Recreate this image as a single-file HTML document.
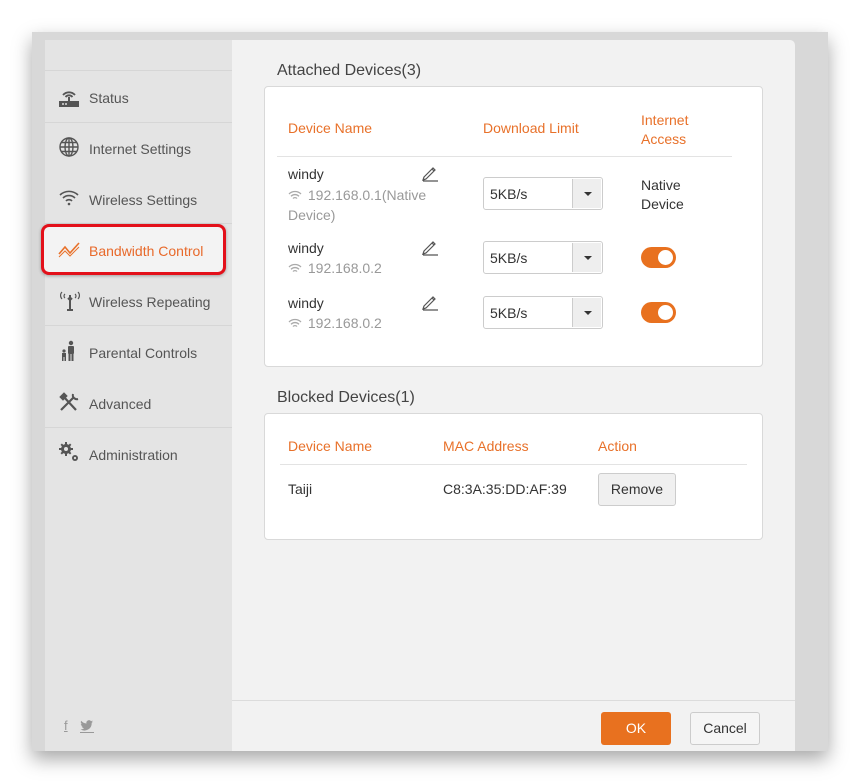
<!DOCTYPE html>
<html><head><meta charset="utf-8"><style>
*{box-sizing:border-box;margin:0;padding:0}
body{width:859px;height:783px;background:#fff;font-family:"Liberation Sans",Arial,sans-serif;position:relative;overflow:hidden}
.a{position:absolute}
.frame{left:32px;top:32px;width:796px;height:719px;background:#d8d8d8;box-shadow:0 8px 18px rgba(0,0,0,.35)}
.side{left:45px;top:40px;width:187px;height:711px;background:#e4e4e4}
.main{left:232px;top:40px;width:563px;height:660px;background:#f2f2f2;border-top-right-radius:5px}
.foot{left:232px;top:700px;width:563px;height:51px;background:#f2f2f2;border-top:1px solid #dcdcdc}
.sep{position:absolute;left:45px;width:187px;height:1px;background:#d6d6d6}
.mi{position:absolute;left:89px;font-size:14px;color:#555;line-height:16px}
.ic{position:absolute;left:58px}
.card{position:absolute;background:#fff;border:1px solid #d9d9d9;border-radius:4px}
.t{position:absolute;font-size:14px;line-height:16px;color:#333}
.o{color:#e8712a}
.g{color:#999}
.sel{position:absolute;left:483px;width:120px;height:33px;border:1px solid #ccc;border-radius:3px;background:#fff}
.sel span{position:absolute;left:6px;top:8px;font-size:14px;color:#333}
.sel b{position:absolute;right:1px;top:1px;width:29px;height:29px;background:#eee;border-left:1px solid #ccc}
.sel b:after{content:"";position:absolute;left:11px;top:13px;border:4px solid transparent;border-top:4px solid #333;border-bottom:0}
.tog{position:absolute;left:641px;width:35px;height:21px;border-radius:11px;background:#e8711f}
.tog:after{content:"";position:absolute;right:3px;top:3px;width:15px;height:15px;border-radius:50%;background:#fff}
.pen{position:absolute;left:421px}
.wf{display:inline-block;vertical-align:-1px;margin-right:2px}
</style></head><body>
<div class="a frame"></div>
<div class="a side"></div>
<div class="a main"></div>
<div class="a foot"></div>

<div class="sep" style="top:70px"></div>
<div class="sep" style="top:122px"></div>
<div class="sep" style="top:223px"></div>
<div class="sep" style="top:325px"></div>
<div class="sep" style="top:427px;width:187px"></div>

<div class="a" style="left:41px;top:224px;width:185px;height:51px;border:3px solid #e3101a;border-radius:8px;background:#f3f3f3;box-shadow:0 1px 3px rgba(0,0,0,.3)"></div>

<svg class="ic" style="top:86px" width="22" height="22" viewBox="0 0 22 22"><path d="M5 9a8 8 0 0 1 12 0M7.5 11a4.5 4.5 0 0 1 7 0" stroke="#555" stroke-width="1.8" fill="none"/><rect x="10" y="11" width="2" height="5" fill="#555"/><rect x="1" y="15" width="20" height="6" fill="#555"/><circle cx="5" cy="18" r="1" fill="#ddd"/><circle cx="8" cy="18" r="1" fill="#ddd"/></svg>
<div class="mi" style="top:90px">Status</div>
<svg class="ic" style="top:136px" width="22" height="22" viewBox="0 0 22 22" fill="none" stroke="#555" stroke-width="1.4"><circle cx="11" cy="11" r="9"/><ellipse cx="11" cy="11" rx="4" ry="9"/><path d="M2 11h18M3.5 6.5h15M3.5 15.5h15M11 2v18"/></svg>
<div class="mi" style="top:141px">Internet Settings</div>
<svg class="ic" style="top:189px" width="22" height="18" viewBox="0 0 22 18" fill="none" stroke="#555" stroke-width="1.6"><path d="M2 6a13 13 0 0 1 18 0M5 9a8.5 8.5 0 0 1 12 0M8 12a4 4 0 0 1 6 0"/><circle cx="11" cy="15" r="1.3" fill="#555" stroke="none"/></svg>
<div class="mi" style="top:192px">Wireless Settings</div>
<svg class="ic" style="top:240px" width="22" height="18" viewBox="0 0 22 18" fill="none" stroke="#e8712a" stroke-width="1.6"><path d="M1 14l6-7 5 6 9-10"/><path d="M1 17l6-6 5 5 9-9" stroke-width="1"/></svg>
<div class="mi o" style="top:243px;color:#e8692a">Bandwidth Control</div>
<svg class="ic" style="top:290px" width="24" height="22" viewBox="0 0 24 22" fill="none" stroke="#555" stroke-width="1.2"><path d="M4 2a5 5 0 0 0 0 7M7 4a2.5 2.5 0 0 0 0 4M20 2a5 5 0 0 1 0 7M17 4a2.5 2.5 0 0 1 0 4"/><path d="M12 5v15M9 20h6M10 8l2 2 2-2" stroke-width="2"/></svg>
<div class="mi" style="top:294px">Wireless Repeating</div>
<svg class="ic" style="top:340px" width="22" height="22" viewBox="0 0 22 22" fill="#555"><circle cx="13" cy="3" r="2.2"/><rect x="10" y="6" width="6" height="8" rx="1"/><rect x="10.5" y="13" width="2" height="8"/><rect x="13.5" y="13" width="2" height="8"/><circle cx="6" cy="11" r="1.6"/><rect x="4" y="13" width="4" height="4"/><rect x="4" y="16" width="1.5" height="5"/><rect x="6.5" y="16" width="1.5" height="5"/></svg>
<div class="mi" style="top:345px">Parental Controls</div>
<svg class="ic" style="top:391px" width="22" height="22" viewBox="0 0 22 22" fill="none" stroke="#555" stroke-width="2.2"><path d="M3 19L16 6M5 5l13 14"/><path d="M2 6l4-4 3 3-4 4z" fill="#555" stroke-width="1"/><path d="M15 3a4 4 0 0 0 5 5" stroke-width="2"/></svg>
<div class="mi" style="top:396px">Advanced</div>
<svg class="ic" style="top:441px" width="22" height="22" viewBox="0 0 22 22" fill="#555"><circle cx="8" cy="8" r="5"/><path d="M7 1h2v3H7zM7 12h2v3H7zM1 7h3v2H1zM12 7h3v2h-3zM2.5 3.9l1.4-1.4 2 2-1.4 1.4zM10 11.5l1.4-1.4 2 2-1.4 1.4zM2.5 12.1l2-2 1.4 1.4-2 2zM10 4.5l2-2 1.4 1.4-2 2z"/><circle cx="8" cy="8" r="2" fill="#e4e4e4"/><circle cx="17" cy="17" r="3"/><circle cx="17" cy="17" r="1.1" fill="#e4e4e4"/></svg>
<div class="mi" style="top:447px">Administration</div>

<div class="t g" style="left:64px;top:718px;font-size:13px;text-decoration:underline">f</div>
<svg class="a" style="left:80px;top:719px" width="14" height="15" viewBox="0 0 14 15" fill="#999"><path d="M13 2.5c-.5.2-1 .4-1.5.4.5-.3 1-.8 1.1-1.4-.5.3-1 .5-1.6.6A2.6 2.6 0 0 0 6.5 4.5 7.3 7.3 0 0 1 1.2 1.8a2.6 2.6 0 0 0 .8 3.4c-.4 0-.8-.1-1.2-.3 0 1.3.9 2.300 2.1 2.5-.4.1-.8.1-1.2 0 .3 1 1.3 1.800 2.400 1.800A5.200 5.200 0 0 1 .5 10.400a7.300 7.300 0 0 0 11.200-6.500c.5-.4.900-.8 1.300-1.400z"/><rect x="0" y="13" width="14" height="1"/></svg>

<div class="t" style="left:277px;top:63px;font-size:16px;color:#444">Attached Devices(3)</div>
<div class="card" style="left:264px;top:86px;width:499px;height:281px"></div>
<div class="t o" style="left:288px;top:120px">Device Name</div>
<div class="t o" style="left:483px;top:120px">Download Limit</div>
<div class="t o" style="left:641px;top:111px;line-height:19px">Internet<br>Access</div>
<div class="a" style="left:277px;top:156px;width:455px;height:1px;background:#e3e3e3"></div>

<div class="t" style="left:288px;top:166px">windy</div>
<div class="t g" style="left:288px;top:185px;line-height:20px;width:150px"><svg class="wf" width="14" height="11" viewBox="0 0 14 11" fill="none" stroke="#aaa" stroke-width="1.3"><path d="M1 4a8.5 8.5 0 0 1 12 0M3 6.3a5.5 5.5 0 0 1 8 0M5 8.5a2.7 2.7 0 0 1 4 0"/></svg> 192.168.0.1(Native Device)</div>
<div class="sel" style="top:177px"><span>5KB/s</span><b></b></div>
<div class="t" style="left:641px;top:176px;line-height:19px">Native<br>Device</div>

<div class="t" style="left:288px;top:240px">windy</div>
<div class="t g" style="left:288px;top:260px"><svg class="wf" width="14" height="11" viewBox="0 0 14 11" fill="none" stroke="#aaa" stroke-width="1.3"><path d="M1 4a8.5 8.5 0 0 1 12 0M3 6.3a5.5 5.5 0 0 1 8 0M5 8.5a2.7 2.7 0 0 1 4 0"/></svg> 192.168.0.2</div>
<div class="sel" style="top:241px"><span>5KB/s</span><b></b></div>
<div class="tog" style="top:247px"></div>

<div class="t" style="left:288px;top:295px">windy</div>
<div class="t g" style="left:288px;top:315px"><svg class="wf" width="14" height="11" viewBox="0 0 14 11" fill="none" stroke="#aaa" stroke-width="1.3"><path d="M1 4a8.5 8.5 0 0 1 12 0M3 6.3a5.5 5.5 0 0 1 8 0M5 8.5a2.7 2.7 0 0 1 4 0"/></svg> 192.168.0.2</div>
<div class="sel" style="top:296px"><span>5KB/s</span><b></b></div>
<div class="tog" style="top:302px"></div>

<svg class="pen" style="top:164px" width="18" height="18" viewBox="0 0 18 18" fill="none" stroke="#555" stroke-width="1.2"><path d="M3 13l9-9 2 2-9 9-3 1zM11 5l2 2M2 17h15"/></svg>
<svg class="pen" style="top:238px" width="18" height="18" viewBox="0 0 18 18" fill="none" stroke="#555" stroke-width="1.2"><path d="M3 13l9-9 2 2-9 9-3 1zM11 5l2 2M2 17h15"/></svg>
<svg class="pen" style="top:293px" width="18" height="18" viewBox="0 0 18 18" fill="none" stroke="#555" stroke-width="1.2"><path d="M3 13l9-9 2 2-9 9-3 1zM11 5l2 2M2 17h15"/></svg>

<div class="t" style="left:277px;top:390px;font-size:16px;color:#444">Blocked Devices(1)</div>
<div class="card" style="left:264px;top:413px;width:499px;height:127px"></div>
<div class="t o" style="left:288px;top:438px">Device Name</div>
<div class="t o" style="left:443px;top:438px">MAC Address</div>
<div class="t o" style="left:598px;top:438px">Action</div>
<div class="a" style="left:280px;top:464px;width:467px;height:1px;background:#e3e3e3"></div>
<div class="t" style="left:288px;top:481px">Taiji</div>
<div class="t" style="left:443px;top:481px">C8:3A:35:DD:AF:39</div>
<div class="a" style="left:598px;top:473px;width:78px;height:33px;border:1px solid #ccc;border-radius:3px;background:#f0f0f0;font-size:14px;color:#333;text-align:center;line-height:31px">Remove</div>

<div class="a" style="left:601px;top:712px;width:70px;height:33px;border-radius:3px;background:#e8711f;color:#fff;font-size:14px;text-align:center;line-height:33px">OK</div>
<div class="a" style="left:690px;top:712px;width:70px;height:33px;border:1px solid #ccc;border-radius:3px;background:#f5f5f5;color:#333;font-size:14px;text-align:center;line-height:31px">Cancel</div>
</body></html>
